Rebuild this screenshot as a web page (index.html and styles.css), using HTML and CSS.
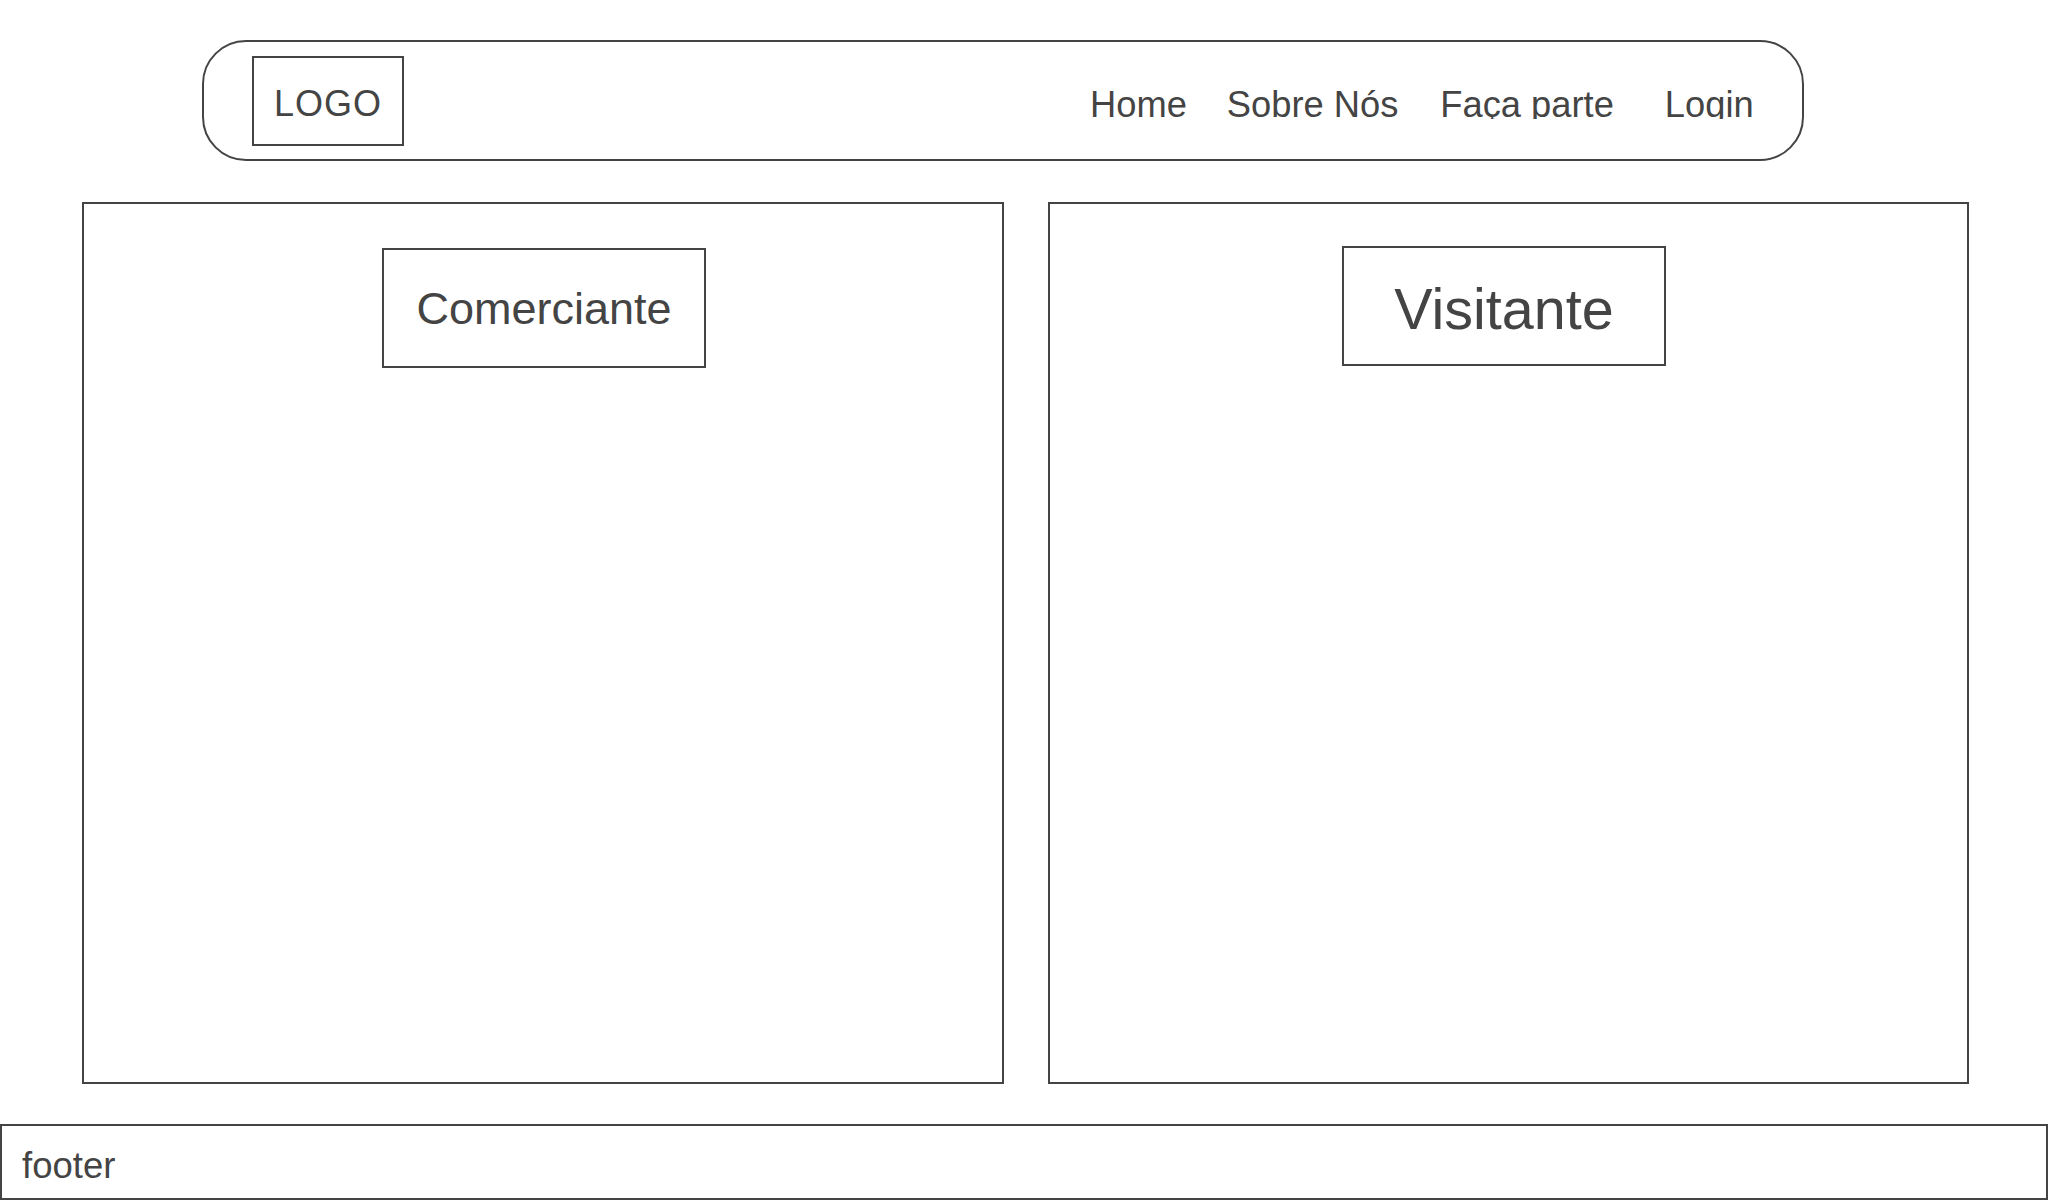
FILE: index.html
```html
<!DOCTYPE html>
<html lang="pt">
<head>
<meta charset="utf-8">
<title>Wireframe</title>
<link rel="stylesheet" href="styles.css">
</head>
<body>
<header class="topbar">
  <div class="logo">LOGO</div>
  <nav class="nav">
    <a class="nav-item nav-home">Home</a>
    <a class="nav-item nav-sobre">Sobre Nós</a>
    <a class="nav-item nav-faca">Faça parte</a>
    <a class="nav-item nav-login">Login</a>
  </nav>
</header>
<main class="panels">
  <section class="panel panel-left">
    <div class="role role-com">Comerciante</div>
  </section>
  <section class="panel panel-right">
    <div class="role role-vis">Visitante</div>
  </section>
</main>
<footer class="footer">footer</footer>
</body>
</html>
```
FILE: styles.css
```css
* { box-sizing: border-box; }
html, body { margin: 0; padding: 0; background: #ffffff; }
body {
  font-family: "Liberation Sans", Arial, sans-serif;
  color: #444444;
  width: 2048px;
  height: 1200px;
  overflow: hidden;
}
.topbar {
  margin: 40px 0 0 202px;
  width: 1602px;
  height: 121px;
  border: 2px solid #444444;
  border-radius: 44px;
  display: flex;
  align-items: flex-start;
}
.logo {
  margin: 14px 0 0 48px;
  width: 152px;
  height: 90px;
  border: 2px solid #444444;
  font-size: 36px;
  line-height: 36px;
  letter-spacing: 1px;
  padding-top: 28px;
  text-align: center;
}
.nav {
  display: flex;
  margin: 45px 0 0 686px;
}
.nav-item {
  font-size: 36.3px;
  line-height: 36px;
  height: 32px;
  overflow: hidden;
  white-space: nowrap;
  color: #444444;
  text-decoration: none;
}
.nav-sobre { margin-left: 40px; }
.nav-faca { margin-left: 42px; }
.nav-login { margin-left: 51px; }
.panels {
  display: flex;
  gap: 44px;
  margin: 41px 0 0 82px;
}
.panel {
  height: 882px;
  border: 2px solid #444444;
}
.panel-left { width: 922px; }
.panel-right { width: 921px; }
.role {
  width: 324px;
  height: 120px;
  border: 2px solid #444444;
  text-align: center;
  white-space: nowrap;
}
.role-com {
  margin: 44px 0 0 298px;
  font-size: 45px;
  line-height: 45px;
  padding-top: 36px;
}
.role-vis {
  margin: 42px 0 0 292px;
  font-size: 57.5px;
  line-height: 57.5px;
  padding-top: 33px;
}
.footer {
  margin-top: 40px;
  width: 2048px;
  height: 76px;
  border: 2px solid #444444;
  font-size: 36.5px;
  line-height: 36.5px;
  padding: 22px 0 0 20px;
}
```
